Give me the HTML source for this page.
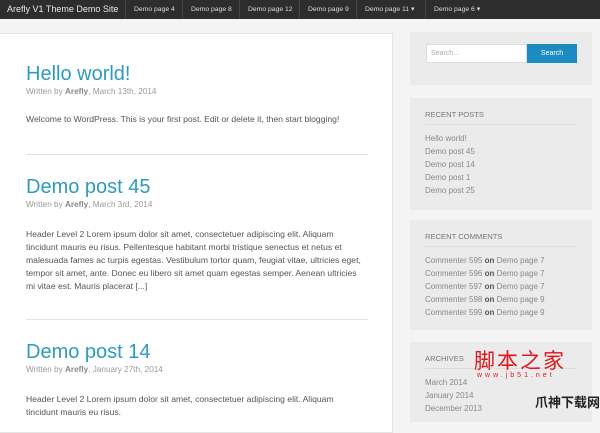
<!DOCTYPE html>
<html><head><meta charset="utf-8"><style>
*{margin:0;padding:0;box-sizing:border-box}
body{width:600px;height:411px;overflow:hidden;background:#f4f4f4;font-family:"Liberation Sans",sans-serif;position:relative}
.nav{position:absolute;left:0;top:0;width:600px;height:19px;background:#2d2d2d;color:#ddd;font-size:6.8px}
.nav div{position:absolute;top:0;height:19px;line-height:19px;border-right:1px solid #444;padding:0 8px;white-space:nowrap}
.nav .brand{left:0;font-size:9px;color:#e8e8e8;width:126px;padding-left:7px}
.main{position:absolute;left:0;top:33px;width:393px;height:400px;background:#fff;border:1px solid #e4e4e4;border-left:none}
.post{position:absolute;left:26px;width:345px}
.post p.b{width:336px}
h2{font-weight:normal;color:#2e9bc0;font-size:20px;line-height:24px}
.meta{font-size:8.2px;color:#999;margin-top:1px}
.meta b{color:#888}
p{font-size:8.6px;color:#555;line-height:13px}
.hr{position:absolute;left:26px;width:342px;height:1px;background:#e2e2e2}
.box{position:absolute;left:410px;width:182px;background:#ebebeb}
.box h3{font-weight:normal;font-size:7.6px;color:#777;position:absolute;left:15px;top:12px}
.box .ln{position:absolute;left:15px;right:15px;top:26px;height:1px;background:#ddd}
.box ul{list-style:none;position:absolute;left:15px;top:34px;font-size:8px;color:#888;line-height:13px;white-space:nowrap}
.box ul b{color:#555;font-weight:bold}
</style></head><body>
<div class="nav">
<div class="brand">Arefly V1 Theme Demo Site</div>
<div style="left:126px;width:57px">Demo page 4</div>
<div style="left:183px;width:57px">Demo page 8</div>
<div style="left:240px;width:60px">Demo page 12</div>
<div style="left:300px;width:57px">Demo page 9</div>
<div style="left:357px;width:69px">Demo page 11 &#9662;</div>
<div style="left:426px;width:66px;border:none">Demo page 6 &#9662;</div>
</div>
<div class="main"></div>
<div class="post" style="top:62px"><h2>Hello world!</h2><div class="meta">Written by <b>Arefly</b>, March 13th, 2014</div>
<p style="margin-top:17px">Welcome to WordPress. This is your first post. Edit or delete it, then start blogging!</p></div>
<div class="hr" style="top:154px"></div>
<div class="post" style="top:175px"><h2>Demo post 45</h2><div class="meta">Written by <b>Arefly</b>, March 3rd, 2014</div>
<p class="b" style="margin-top:19px">Header Level 2 Lorem ipsum dolor sit amet, consectetuer adipiscing elit. Aliquam tincidunt mauris eu risus. Pellentesque habitant morbi tristique senectus et netus et malesuada fames ac turpis egestas. Vestibulum tortor quam, feugiat vitae, ultricies eget, tempor sit amet, ante. Donec eu libero sit amet quam egestas semper. Aenean ultricies mi vitae est. Mauris placerat [...]</p></div>
<div class="hr" style="top:319px"></div>
<div class="post" style="top:340px"><h2>Demo post 14</h2><div class="meta">Written by <b>Arefly</b>, January 27th, 2014</div>
<p class="b" style="margin-top:19px">Header Level 2 Lorem ipsum dolor sit amet, consectetuer adipiscing elit. Aliquam tincidunt mauris eu risus.</p></div>
<div class="box" style="top:32px;height:53px">
<div style="position:absolute;left:16px;top:12px;width:101px;height:19px;background:#fff;border:1px solid #ddd;font-size:7px;color:#aaa;line-height:17px;padding-left:4px">Search...</div>
<div style="position:absolute;left:117px;top:12px;width:50px;height:19px;background:#1a8cc2;color:#fff;font-size:7px;line-height:19px;text-align:center">Search</div>
</div>
<div class="box" style="top:98px;height:112px"><h3>RECENT POSTS</h3><div class="ln"></div>
<ul><li>Hello world!</li><li>Demo post 45</li><li>Demo post 14</li><li>Demo post 1</li><li>Demo post 25</li></ul></div>
<div class="box" style="top:220px;height:110px"><h3>RECENT COMMENTS</h3><div class="ln"></div>
<ul><li>Commenter 595 <b>on</b> Demo page 7</li><li>Commenter 596 <b>on</b> Demo page 7</li><li>Commenter 597 <b>on</b> Demo page 7</li><li>Commenter 598 <b>on</b> Demo page 9</li><li>Commenter 599 <b>on</b> Demo page 9</li></ul></div>
<div class="box" style="top:342px;height:80px"><h3>ARCHIVES</h3><div class="ln"></div>
<ul><li>March 2014</li><li>January 2014</li><li>December 2013</li></ul></div>
<div style="position:absolute;left:474px;top:345px;font-family:'Noto Sans CJK SC',sans-serif;font-size:21px;color:#e0161b;letter-spacing:2px">脚本之家</div>
<div style="position:absolute;left:477px;top:372px;font-size:7px;color:#e0161b;letter-spacing:3px">www.jb51.net</div>
<div style="position:absolute;left:535px;top:392px;font-family:'Noto Sans CJK SC',sans-serif;font-size:13px;font-weight:bold;color:#222">爪神下载网</div>
</body></html>
